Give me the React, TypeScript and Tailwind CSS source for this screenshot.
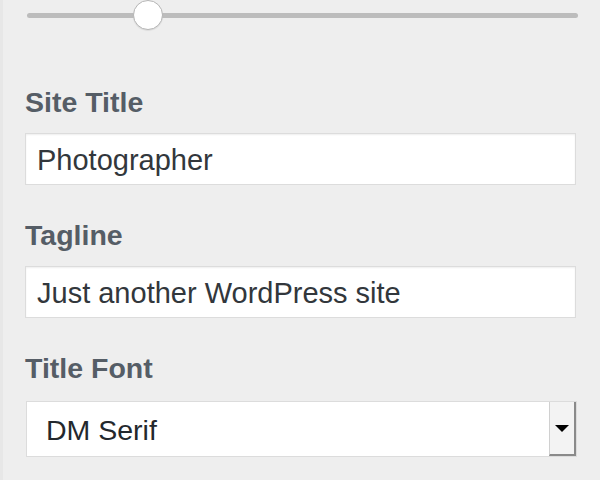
export default function App() {
  const fields = [
    { label: "Site Title", value: "Photographer" },
    { label: "Tagline", value: "Just another WordPress site" },
  ];

  return (
    <div className="min-h-[480px] w-[600px] overflow-hidden bg-[#eeeeee] border-l-[3px] border-[#e7e7e7] font-['Liberation_Sans',Arial,sans-serif]">
      {/* slider */}
      <div className="relative ml-[24px] mr-[22px] flex h-[30px] items-center">
        <div className="h-[5px] w-full rounded-full bg-[#bcbcbc]"></div>
        <div className="absolute left-[106px] top-0 h-[30px] w-[30px] rounded-full border border-[#b5b5b5] bg-white shadow-[0_1px_1px_rgba(0,0,0,0.08)]"></div>
      </div>

      <div className="mt-[56px] pl-[22px] pr-[24px]">
        {fields.map((f) => (
          <div key={f.label} className="mb-[34px]">
            <div className="text-[28.5px] font-bold leading-[32px] text-[#555d66]">{f.label}</div>
            <div className="mt-[15px] flex h-[52px] items-center border border-[#dcdcdc] bg-white pl-[11px] pt-[3px] text-[29px] text-[#32373c] shadow-[inset_0_1px_2px_rgba(0,0,0,0.07)]">
              {f.value}
            </div>
          </div>
        ))}

        <div>
          <div className="text-[28.5px] font-bold leading-[32px] text-[#555d66]">Title Font</div>
          <div className="ml-[1px] mr-[-1px] mt-[17px] flex h-[56px] border border-[#dcdcdc] bg-white">
            <div className="flex flex-1 items-center pl-[19px] pt-[2px] text-[28.5px] text-[#23282d]">DM Serif</div>
            <div className="flex w-[27px] items-center justify-center border-b-2 border-l border-r-2 border-b-[#8a8a8a] border-l-[#d0d0d0] border-r-[#8a8a8a] bg-[#f3f3f3]">
              <div className="h-0 w-0 border-l-[7px] border-r-[7px] border-t-[7px] border-l-transparent border-r-transparent border-t-black"></div>
            </div>
          </div>
        </div>
      </div>
    </div>
  );
}
